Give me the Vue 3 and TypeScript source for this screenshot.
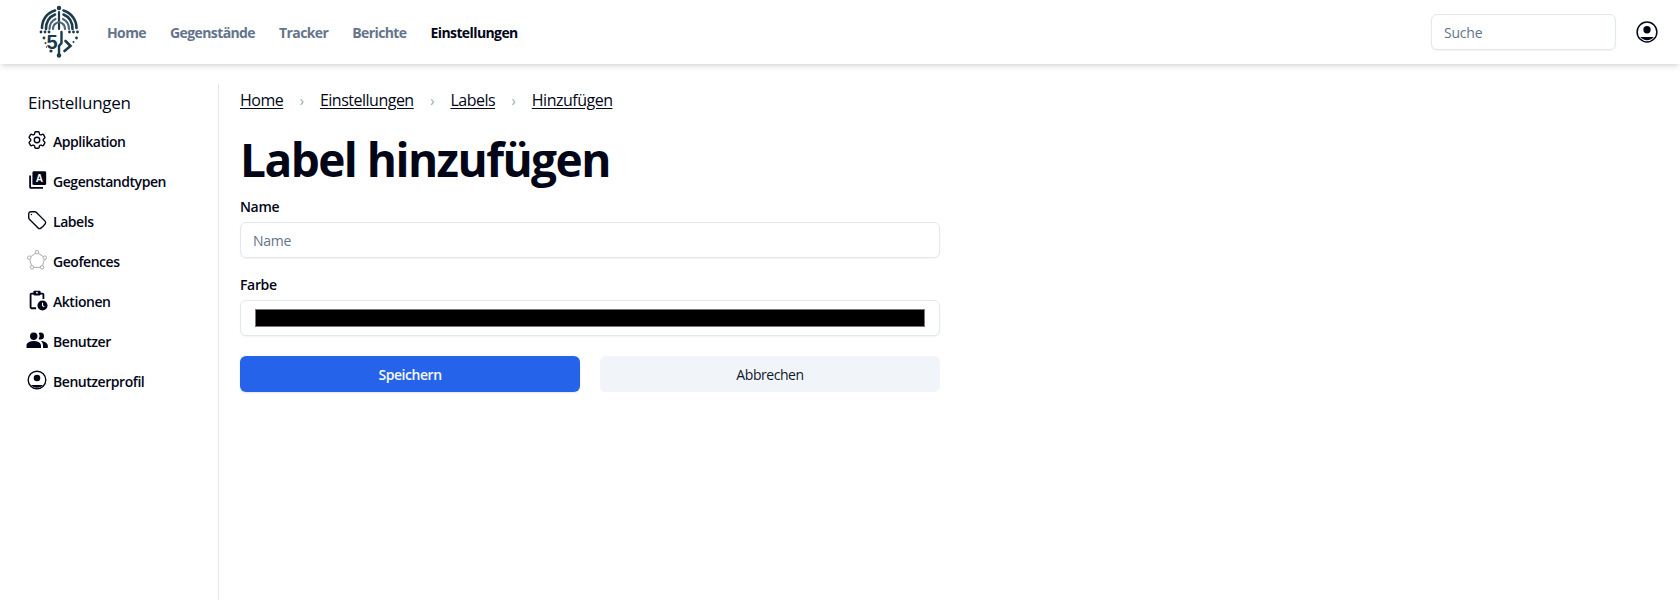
<template>
  <div class="page">
    <header class="topbar">
      <svg class="logo" viewBox="-1 0 41 54" fill="none" stroke="#1c3a49" stroke-linecap="round">
        <circle cx="18.500" cy="3" r="2.200" fill="#1c3a49" stroke="none" />
        <path d="M18.500 7v17" stroke-width="2.200" />
        <path d="M1.500 23C1.500 15 6 8 14.500 5.500M36 23C36 15 31 8 23 5.500" stroke-width="2.600" />
        <path d="M5.500 24C5.500 17 8.500 12 14.500 9.500M32 24C32 17 29 12 23 9.500" stroke-width="2.600" />
        <path d="M9 24c0-5 2-8 6-10M28.500 24c0-5-2-8-6-10" stroke-width="2.200" stroke="#4a6675" />
        <path d="M12.500 24c0-3 2-6 6-7 4 1 6 4 6 7" stroke-width="2.200" stroke="#4a6675" />
        <g fill="#1c3a49" stroke="none">
          <circle cx="0.500" cy="27" r="1.400" /><circle cx="4.500" cy="27" r="1.400" /><circle cx="8.500" cy="27" r="1.400" />
          <circle cx="29" cy="27" r="1.400" /><circle cx="33" cy="27" r="1.400" /><circle cx="37" cy="27" r="1.400" />
          <circle cx="3.500" cy="33" r="1.400" /><circle cx="36" cy="33" r="1.400" /><circle cx="5" cy="38" r="1" />
          <circle cx="10.500" cy="46" r="1.600" /><circle cx="6" cy="42" r="0.700" /><circle cx="33" cy="37" r="1" />
          <circle cx="18.500" cy="50.500" r="2.200" />
        </g>
        <text x="17" y="44" text-anchor="end" class="logo-five">5</text>
        <path d="M21 27v11l-2.500 3v9" stroke-width="2.400" />
        <path d="M25 36l5 5-6 5" stroke-width="2.600" />
      </svg>
      <nav class="nav">
        <a v-for="link in navLinks" :key="link" class="nav-link" :class="{ active: link === 'Einstellungen' }">{{ link }}</a>
      </nav>
      <input class="search" type="text" placeholder="Suche" />
      <svg class="user-icon" viewBox="0 0 24 24">
        <circle cx="12" cy="12" r="10.800" fill="none" stroke="#020617" stroke-width="1.600" />
        <circle cx="12" cy="9.500" r="4" fill="#020617" />
        <path d="M4.500 17.500h15a10 10 0 0 1-15 0z" fill="#020617" />
      </svg>
    </header>

    <div class="body-row">
      <aside class="sidebar">
        <h2 class="side-title">Einstellungen</h2>
        <a class="side-item">
          <svg class="icon" viewBox="0 0 24 24" fill="none" stroke="#020617" stroke-width="1.500">
            <path d="M9.594 3.940c.09-.542.56-.94 1.110-.94h2.593c.55 0 1.020.398 1.110.94l.213 1.281c.063.374.313.686.645.87.074.04.147.083.22.127.325.196.72.257 1.075.124l1.217-.456a1.125 1.125 0 0 1 1.370.49l1.296 2.247a1.125 1.125 0 0 1-.26 1.431l-1.003.827c-.293.241-.438.613-.43.992a7.723 7.723 0 0 1 0 .255c-.008.378.137.75.43.991l1.004.827c.424.35.534.955.26 1.430l-1.298 2.247a1.125 1.125 0 0 1-1.369.491l-1.217-.456c-.355-.133-.75-.072-1.076.124a6.470 6.470 0 0 1-.22.128c-.331.183-.581.495-.644.869l-.213 1.281c-.09.543-.56.94-1.110.94h-2.594c-.55 0-1.019-.398-1.110-.94l-.213-1.281c-.062-.374-.312-.686-.644-.87a6.520 6.520 0 0 1-.22-.127c-.325-.196-.72-.257-1.076-.124l-1.217.456a1.125 1.125 0 0 1-1.369-.49l-1.297-2.247a1.125 1.125 0 0 1 .26-1.431l1.004-.827c.292-.24.437-.613.43-.991a6.932 6.932 0 0 1 0-.255c.007-.38-.138-.751-.43-.992l-1.004-.827a1.125 1.125 0 0 1-.26-1.430l1.297-2.247a1.125 1.125 0 0 1 1.370-.491l1.216.456c.356.133.751.072 1.076-.124.072-.044.146-.086.22-.128.332-.183.582-.495.644-.869l.214-1.280Z" />
            <path d="M15 12a3 3 0 1 1-6 0 3 3 0 0 1 6 0Z" />
          </svg>
          Applikation
        </a>
        <a class="side-item">
          <svg class="icon" viewBox="0 0 24 24">
            <path d="M3.500 7v13A1.500 1.500 0 0 0 5 21.500h13.500v-2H5.500V7z" fill="#020617" />
            <rect x="7" y="2.500" width="15" height="15" rx="1.500" fill="#020617" />
            <text x="14.500" y="14.300" text-anchor="middle" class="icon-letter">A</text>
          </svg>
          Gegenstandtypen
        </a>
        <a class="side-item">
          <svg class="icon" viewBox="0 0 24 24" fill="none" stroke="#020617" stroke-width="1.500" stroke-linecap="round" stroke-linejoin="round">
            <path d="M9.568 3H5.250A2.250 2.250 0 0 0 3 5.250v4.318c0 .597.237 1.170.659 1.591l9.581 9.581c.699.699 1.780.872 2.607.33a18.095 18.095 0 0 0 5.223-5.223c.542-.827.369-1.908-.33-2.607L11.160 3.660A2.250 2.250 0 0 0 9.568 3Z" />
            <path d="M6 6h.008v.008H6V6Z" />
          </svg>
          Labels
        </a>
        <a class="side-item">
          <svg class="icon" viewBox="0 0 24 24" fill="none" stroke="#a3a3a3" stroke-width="1">
            <path d="M12 3.500L20.500 9.500L17.500 20H6.500L3.500 9.500Z" />
            <g fill="#fff">
              <circle cx="12" cy="3.500" r="1.900" /><circle cx="20.500" cy="9.500" r="1.900" /><circle cx="17.500" cy="20" r="1.900" />
              <circle cx="6.500" cy="20" r="1.900" /><circle cx="3.500" cy="9.500" r="1.900" />
            </g>
          </svg>
          Geofences
        </a>
        <a class="side-item">
          <svg class="icon" viewBox="0 0 24 24">
            <path d="M9 4H6a2 2 0 0 0-2 2v14a2 2 0 0 0 2 2h5v-2H6V6h12v5h2V6a2 2 0 0 0-2-2h-3" fill="#020617" />
            <rect x="8" y="2" width="8" height="5" rx="1.200" fill="#020617" />
            <circle cx="12" cy="4" r="1" fill="#fff" />
            <circle cx="18" cy="18" r="5.500" fill="#020617" />
            <path d="M18 15v3.300l2 1" fill="none" stroke="#fff" stroke-width="1.200" />
          </svg>
          Aktionen
        </a>
        <a class="side-item">
          <svg class="icon" viewBox="1 3 22 17">
            <path fill="#020617" d="M16 17v2.500H1.500V17s0-4.500 7.250-4.500S16 17 16 17m-3.500-9.500A3.750 3.750 0 1 0 8.750 11.500 3.750 3.750 0 0 0 12.500 7.500m3.440 5A5.320 5.320 0 0 1 18 17v2.500h4.800V17s0-3.900-6.860-4.500M15.500 4a3.390 3.390 0 0 0-1.930.59 5 5 0 0 1 0 5.820A3.390 3.390 0 0 0 15.500 11a3.500 3.500 0 0 0 0-7z" />
          </svg>
          Benutzer
        </a>
        <a class="side-item">
          <svg class="icon" viewBox="0 0 24 24">
            <circle cx="12" cy="12" r="9.600" fill="none" stroke="#020617" stroke-width="1.500" />
            <circle cx="12" cy="9.800" r="3.600" fill="#020617" />
            <path d="M5.300 17.500h13.400a9 9 0 0 1-13.400 0z" fill="#020617" />
          </svg>
          Benutzerprofil
        </a>
      </aside>

      <main class="content">
        <div class="crumbs">
          <template v-for="(crumb, i) in crumbs" :key="crumb">
            <span v-if="i > 0" class="crumb-sep">›</span>
            <a class="crumb">{{ crumb }}</a>
          </template>
        </div>
        <h1 class="title">Label hinzufügen</h1>
        <form class="form" @submit.prevent>
          <label class="field">
            <span class="field-label">Name</span>
            <input class="text-input" type="text" placeholder="Name" />
          </label>
          <label class="field">
            <span class="field-label">Farbe</span>
            <input class="color-input" type="color" value="#000000" />
          </label>
          <div class="actions">
            <button class="btn primary" type="submit">Speichern</button>
            <button class="btn secondary" type="button">Abbrechen</button>
          </div>
        </form>
      </main>
    </div>
  </div>
</template>

<script setup lang="ts">
const navLinks: string[] = ['Home', 'Gegenstände', 'Tracker', 'Berichte', 'Einstellungen']
const crumbs: string[] = ['Home', 'Einstellungen', 'Labels', 'Hinzufügen']
</script>

<style>
html,
body {
  margin: 0;
  background: #fff;
}
</style>

<style scoped>
.page {
  height: 600px;
  display: flex;
  flex-direction: column;
  overflow: hidden;
  font-family: "Open Sans", "Noto Sans", sans-serif;
  color: #020617;
}

.topbar {
  height: 64px;
  flex-shrink: 0;
  display: flex;
  align-items: center;
  padding: 0 22px 0 39px;
  background: #fff;
  box-shadow: 0 4px 6px -1px rgba(0, 0, 0, 0.1), 0 2px 4px -2px rgba(0, 0, 0, 0.1);
  position: relative;
}

.logo {
  width: 42px;
  height: 54px;
  flex-shrink: 0;
}

.logo-five {
  font: 700 20px "Liberation Sans", sans-serif;
  fill: #1c3a49;
  stroke: none;
}

.nav {
  display: flex;
  gap: 24px;
  margin-left: 26px;
  flex: 1;
}

.nav-link {
  font-size: 14px;
  font-weight: 700;
  color: #64748b;
  letter-spacing: -0.6px;
}

.nav-link.active {
  color: #020617;
}

.search {
  width: 185px;
  height: 36px;
  box-sizing: border-box;
  padding: 0 12px;
  border: 1px solid #e2e8f0;
  border-radius: 6px;
  font: 14px "Open Sans", sans-serif;
  letter-spacing: -0.2px;
  box-shadow: 0 1px 2px rgba(0, 0, 0, 0.05);
}

.search::placeholder,
.text-input::placeholder {
  color: #64748b;
  opacity: 1;
}

.user-icon {
  width: 22px;
  height: 22px;
  margin-left: 20px;
}

.body-row {
  flex: 1;
  display: flex;
  padding-top: 20px;
}

.sidebar {
  width: 192px;
  box-sizing: border-box;
  margin-left: 27px;
  margin-right: 20px;
  border-right: 1px solid #e2e8f0;
}

.side-title {
  margin: 7px 0 6px 1px;
  font-size: 17px;
  line-height: 24px;
  font-weight: 500;
  letter-spacing: -0.3px;
}

.side-item {
  height: 40px;
  display: flex;
  align-items: center;
  gap: 6px;
  font-size: 14px;
  font-weight: 600;
  letter-spacing: -0.45px;
}

.icon {
  width: 22px;
  height: 22px;
  flex-shrink: 0;
  margin: -2px -1px 0;
}

.icon-letter {
  font: 700 11px "Liberation Sans", sans-serif;
  fill: #fff;
}

.content {
  width: 700px;
  margin-left: 1px;
}

.crumbs {
  display: flex;
  align-items: center;
  gap: 16.5px;
  height: 32px;
  font-size: 16px;
  letter-spacing: -0.5px;
}

.crumb {
  text-decoration: underline;
  text-underline-offset: 2px;
}

.crumb-sep {
  color: #94a3b8;
  font-size: 14px;
}

.title {
  margin: 15px 0 0;
  font-size: 46px;
  line-height: 56px;
  font-weight: 700;
  letter-spacing: -1.55px;
}

.form {
  display: flex;
  flex-direction: column;
  gap: 17px;
  margin-top: 10px;
}

.field {
  display: flex;
  flex-direction: column;
  gap: 5px;
}

.field-label {
  font-size: 14px;
  line-height: 20px;
  font-weight: 600;
  letter-spacing: -0.35px;
}

.text-input,
.color-input {
  width: 100%;
  height: 36px;
  box-sizing: border-box;
  border: 1px solid #e2e8f0;
  border-radius: 6px;
  background: #fff;
  box-shadow: 0 1px 2px rgba(0, 0, 0, 0.05);
}

.text-input {
  padding: 0 12px;
  font: 14px "Open Sans", sans-serif;
  letter-spacing: -0.3px;
}

.color-input {
  padding: 4px 12px;
}

.actions {
  display: flex;
  gap: 20px;
  margin-top: 3px;
}

.btn {
  flex: 1;
  height: 36px;
  border: none;
  border-radius: 6px;
  font: 600 14px "Open Sans", sans-serif;
  letter-spacing: -0.45px;
}

.btn.primary {
  background: #2563eb;
  color: #f8fafc;
  box-shadow: 0 1px 2px rgba(0, 0, 0, 0.1);
}

.btn.secondary {
  background: #f1f5f9;
  color: #0f172a;
  font-weight: 500;
}
</style>
